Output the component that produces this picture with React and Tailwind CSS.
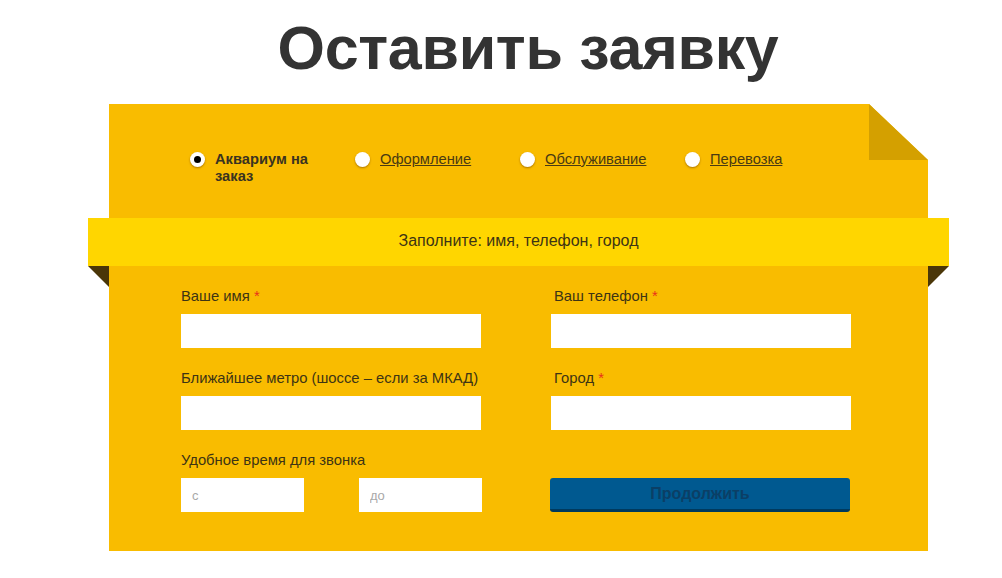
import React, { useState } from "react";

const options = [
  { id: 1, label: "Аквариум на заказ" },
  { id: 2, label: "Оформление" },
  { id: 3, label: "Обслуживание" },
  { id: 4, label: "Перевозка" },
];

const Field = ({ label, required, shift }) => (
  <div className="flex flex-col">
    <label
      className={
        shift
          ? "pt-[2px] pl-[3px] whitespace-nowrap text-[14.8px] leading-[17px] text-[#3d3414]"
          : "pt-[2px] whitespace-nowrap text-[14.8px] leading-[17px] text-[#3d3414]"
      }
    >
      {label}
      {required && <span className="text-[#e8301c]"> *</span>}
    </label>
    <input
      type="text"
      className="mt-[9px] h-[34px] w-[300px] bg-white outline-none px-[10px] text-[13px]"
    />
  </div>
);

const App = () => {
  const [value, setValue] = useState(1);

  return (
    <div className="w-[1002px] h-[578px] bg-white overflow-hidden font-['Liberation_Sans',Arial,sans-serif]">
      <div className="h-[104px] flex justify-center pl-[54px] pt-[13px]">
        <h1 className="text-[61px] leading-[70px] font-bold text-[#333333] tracking-[-0.3px]">
          Оставить заявку
        </h1>
      </div>

      <div className="relative ml-[109px] w-[819px] h-[447px] bg-[#f9bc00]">
        {/* folded corner */}
        <svg
          className="absolute right-0 top-0"
          width="59"
          height="56"
          viewBox="0 0 59 56"
        >
          <polygon points="0,0 59,0 59,56" fill="#ffffff" />
          <polygon points="0,0 0,56 59,56" fill="#d4a000" />
        </svg>

        <div className="h-[114px] flex items-start pt-[47px] pl-[81px]">
          {options.map((o) => {
            const checked = value === o.id;
            return (
              <div
                key={o.id}
                className="w-[165px] flex items-start cursor-pointer"
                onClick={() => setValue(o.id)}
              >
                <span className="mt-[1px] w-[15px] h-[15px] rounded-full bg-white shadow-[0_1px_2px_rgba(120,70,0,0.6)] flex items-center justify-center shrink-0">
                  {checked && (
                    <span className="w-[7px] h-[7px] rounded-full bg-black" />
                  )}
                </span>
                <span
                  className={
                    checked
                      ? "ml-[10px] w-[100px] text-[14.7px] leading-[17px] font-bold text-[#3a3320]"
                      : "ml-[10px] text-[14.7px] leading-[17px] underline text-[#4a3a12]"
                  }
                >
                  {o.label}
                </span>
              </div>
            );
          })}
        </div>

        {/* ribbon */}
        <div className="relative -mx-[21px] h-[48px] bg-[#ffd600] flex items-center justify-center">
          <span className="text-[16px] text-[#3d3414] -mt-[2px]">
            Заполните: имя, телефон, город
          </span>
          <svg
            className="absolute left-0 top-[48px]"
            width="21"
            height="21"
            viewBox="0 0 21 21"
          >
            <polygon points="0,0 21,0 21,21" fill="#4a3608" />
          </svg>
          <svg
            className="absolute right-0 top-[48px]"
            width="21"
            height="21"
            viewBox="0 0 21 21"
          >
            <polygon points="0,0 21,0 0,21" fill="#4a3608" />
          </svg>
        </div>

        <div className="pt-[20px] pl-[72px] grid grid-cols-[300px_300px] gap-x-[70px] gap-y-[20px]">
          <Field label="Ваше имя" required />
          <Field label="Ваш телефон" required shift />
          <Field label="Ближайшее метро (шоссе – если за МКАД)" />
          <Field label="Город" required shift />
          <div className="flex flex-col">
            <label className="pt-[2px] whitespace-nowrap text-[14.8px] leading-[17px] text-[#3d3414]">
              Удобное время для звонка
            </label>
            <div className="mt-[9px] flex gap-[55px]">
              <input
                type="text"
                placeholder="с"
                className="h-[34px] w-[123px] bg-white outline-none px-[11px] text-[13px] placeholder:text-[#a9a9a9]"
              />
              <input
                type="text"
                placeholder="до"
                className="h-[34px] w-[123px] bg-white outline-none px-[11px] text-[13px] placeholder:text-[#a9a9a9]"
              />
            </div>
          </div>
          <div className="flex flex-col justify-end -ml-[1px]">
            <button className="h-[34px] w-[300px] rounded-[3px] bg-[#005990] border-b-[3px] border-[#003a5e] text-[16px] font-bold text-[#0b3f66]">
              Продолжить
            </button>
          </div>
        </div>
      </div>
    </div>
  );
};

export default App;
